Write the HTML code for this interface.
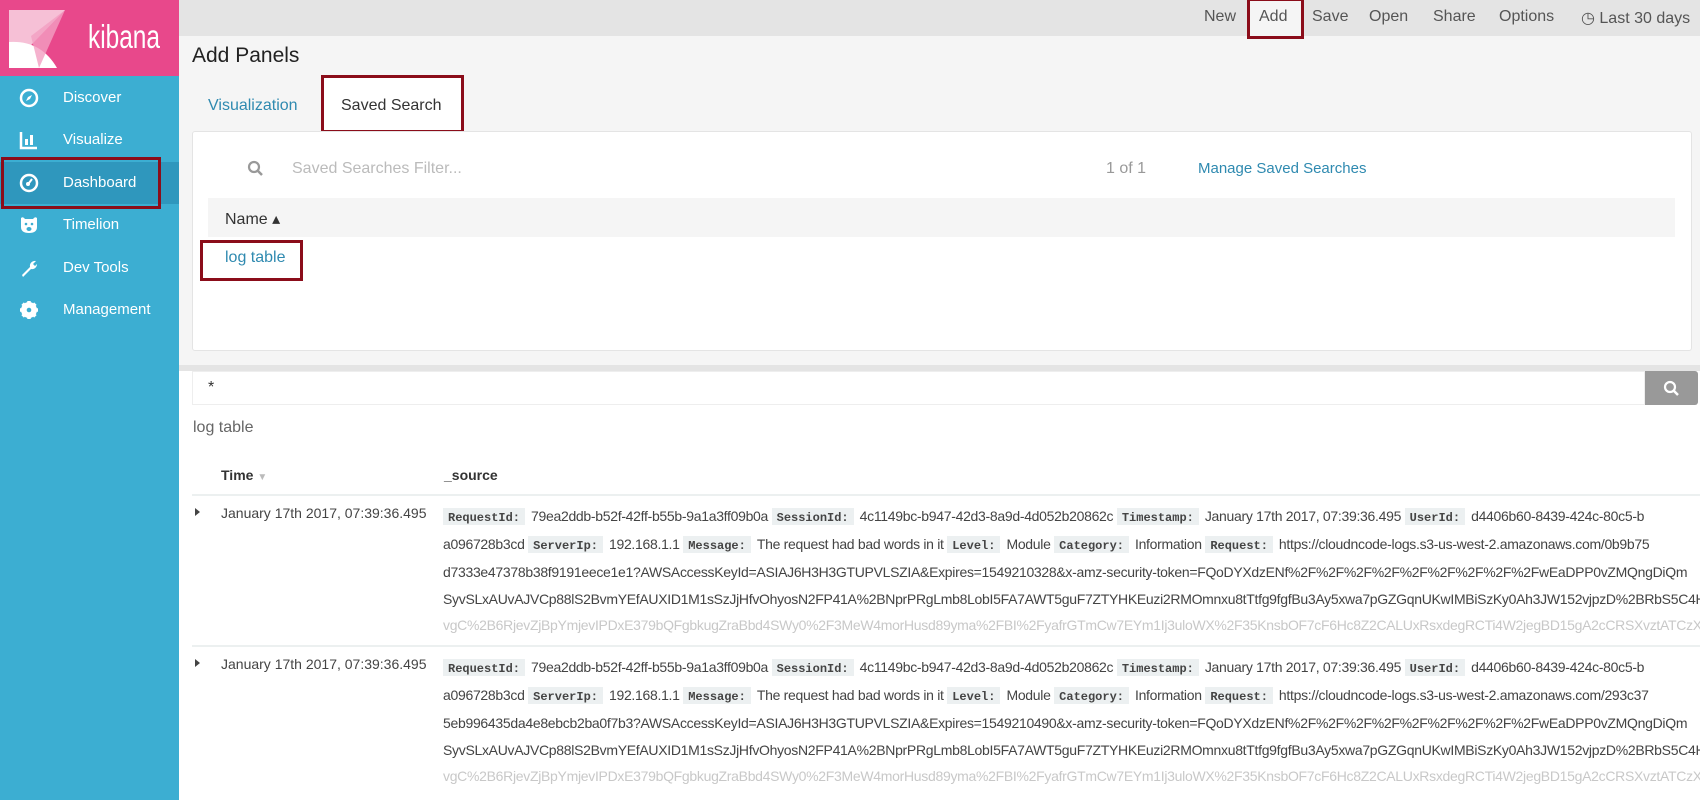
<!DOCTYPE html>
<html><head><meta charset="utf-8"><style>
*{box-sizing:border-box;margin:0;padding:0}
body{width:1700px;height:800px;overflow:hidden;font-family:"Liberation Sans",sans-serif;background:#f5f5f5;position:relative;color:#333}
.side{position:absolute;left:0;top:0;width:179px;height:800px;background:#3caed2}
.logo{height:76px;background:#e8488b;position:relative;overflow:hidden}
.logo span{position:absolute;left:88px;top:18px;color:#fff;font-size:33px;transform:scaleX(0.74);transform-origin:left top;white-space:nowrap}
.nav{position:absolute;left:0;width:179px;height:42px;color:#fff;font-size:15px}
.nav .t{position:absolute;left:63px;top:12px}
.nav svg{position:absolute;left:19px;top:11px}
.sel{background:#2f97bd}
.rbox{position:absolute;border:3px solid #8b0d1a}
.top{position:absolute;left:179px;top:0;right:0;height:36px;background:#e4e4e4}
.menu{position:absolute;top:8px;font-size:16px;color:#555}
.a{position:absolute}
.panel{position:absolute;left:192px;top:131px;width:1500px;height:220px;background:#fff;border:1px solid #e4e4e4;border-radius:3px}
.row{position:absolute;left:443px;white-space:nowrap;overflow:hidden;width:1257px;font-size:14px;color:#444;letter-spacing:-0.3px}
.k{font-family:"Liberation Mono",monospace;font-weight:bold;font-size:12px;background:#ecf0f1;padding:3px 5px;color:#444;margin-right:6px;letter-spacing:0}
.fade{color:#c8c8c8}
.tm{position:absolute;left:221px;font-size:14px;color:#444}
.car{position:absolute;left:195px;width:0;height:0;border-left:5px solid #444;border-top:4px solid transparent;border-bottom:4px solid transparent}
</style></head><body>
<div class="side">
 <div class="logo">
  <svg width="56" height="58" style="position:absolute;left:9px;top:10px" viewBox="0 0 56 58">
   <polygon points="0,0 56,0 0,58" fill="#f6c0d6"/>
   <path d="M0,32 Q32,30 48,58 L0,58Z" fill="#fff"/>
   <polygon points="22,26 56,0 30,58" fill="#f29fc2" opacity=".8"/>
  </svg>
  <span>kibana</span>
 </div>
 <div class="nav" style="top:77px"><svg width="20" height="20" viewBox="0 0 20 20"><circle cx="10" cy="10" r="8" fill="none" stroke="#fff" stroke-width="2.5"/><path d="M13,7 L11,11 L7,13 L9,9Z" fill="#fff"/></svg><span class="t">Discover</span></div>
 <div class="nav" style="top:119px"><svg width="20" height="20" viewBox="0 0 20 20"><path d="M2,2 V18 H18" fill="none" stroke="#fff" stroke-width="2.5"/><rect x="6" y="9" width="3" height="6" fill="#fff"/><rect x="11" y="5" width="3" height="10" fill="#fff"/></svg><span class="t">Visualize</span></div>
 <div class="nav sel" style="top:162px"><svg width="20" height="20" viewBox="0 0 20 20"><circle cx="10" cy="10" r="8" fill="none" stroke="#fff" stroke-width="2.5"/><circle cx="9" cy="11" r="2" fill="#fff"/><path d="M10,10 L13,6" stroke="#fff" stroke-width="2"/></svg><span class="t">Dashboard</span></div>
 <div class="nav" style="top:204px"><svg width="20" height="20" viewBox="0 0 20 20"><path d="M2,3 Q4,1 6,4 H14 Q16,1 18,3 V12 Q18,18 10,18 Q2,18 2,12Z" fill="#fff"/><circle cx="7" cy="9" r="1.3" fill="#3caed2"/><circle cx="13" cy="9" r="1.3" fill="#3caed2"/><ellipse cx="10" cy="14" rx="2.5" ry="2" fill="#3caed2"/></svg><span class="t">Timelion</span></div>
 <div class="nav" style="top:247px"><svg width="20" height="20" viewBox="0 0 20 20"><path d="M3,17 L11,9 A5,5 0 0 1 17,3 L14,6 L16,8 L18,6 A5,5 0 0 1 12,11 L4,19Z" fill="#fff"/></svg><span class="t">Dev Tools</span></div>
 <div class="nav" style="top:289px"><svg width="20" height="20" viewBox="0 0 20 20"><circle cx="10" cy="10" r="6" fill="none" stroke="#fff" stroke-width="4"/><g stroke="#fff" stroke-width="3.5"><path d="M10,1V19M1,10H19M3.6,3.6L16.4,16.4M16.4,3.6L3.6,16.4"/></g><circle cx="10" cy="10" r="2.3" fill="#3caed2"/></svg><span class="t">Management</span></div>
</div>
<div class="rbox" style="left:1px;top:157px;width:160px;height:52px"></div>

<div class="top"></div>
<div class="menu" style="left:1204px">New</div>
<div class="a" style="left:1248px;top:0;width:55px;height:39px;background:#f5f5f5"></div>
<div class="menu" style="left:1259px">Add</div>
<div class="rbox" style="left:1247px;top:-2px;width:57px;height:41px"></div>
<div class="menu" style="left:1312px">Save</div>
<div class="menu" style="left:1369px">Open</div>
<div class="menu" style="left:1433px">Share</div>
<div class="menu" style="left:1499px">Options</div>
<div class="menu" style="left:1581px">&#9719; Last 30 days</div>

<div class="a" style="left:192px;top:44px;font-size:21px;color:#222">Add Panels</div>
<div class="a" style="left:208px;top:97px;font-size:16px;color:#2f8ab0">Visualization</div>
<div class="a" style="left:322px;top:76px;width:141px;height:56px;background:#fff"></div>
<div class="a" style="left:341px;top:97px;font-size:16px;color:#333">Saved Search</div>
<div class="rbox" style="left:321px;top:75px;width:143px;height:58px"></div>

<div class="panel"></div>
<svg class="a" style="left:247px;top:160px" width="17" height="17" viewBox="0 0 17 17"><circle cx="7" cy="7" r="5" fill="none" stroke="#999" stroke-width="2.2"/><path d="M10.5,10.5 L15,15" stroke="#999" stroke-width="2.5"/></svg>
<div class="a" style="left:292px;top:160px;font-size:16px;color:#bbb">Saved Searches Filter...</div>
<div class="a" style="left:1106px;top:160px;font-size:16px;color:#999">1 of 1</div>
<div class="a" style="left:1198px;top:160px;font-size:15px;color:#2f8ab0">Manage Saved Searches</div>
<div class="a" style="left:208px;top:198px;width:1467px;height:39px;background:#f5f5f5"></div>
<div class="a" style="left:225px;top:209px;font-size:16px;color:#333">Name &#9652;</div>
<div class="a" style="left:225px;top:249px;font-size:16px;color:#2f8ab0">log table</div>
<div class="rbox" style="left:200px;top:240px;width:103px;height:41px"></div>

<div class="a" style="left:179px;top:365px;width:1521px;height:435px;background:#fff"></div>
<div class="a" style="left:179px;top:365px;width:1521px;height:6px;background:#e4e4e4"></div>
<div class="a" style="left:192px;top:371px;width:1453px;height:34px;background:#fff;border:1px solid #eee"></div>
<div class="a" style="left:208px;top:379px;font-size:16px">*</div>
<div class="a" style="left:1645px;top:371px;width:53px;height:34px;background:#999;border-radius:0 3px 3px 0"></div>
<svg class="a" style="left:1663px;top:380px" width="17" height="17" viewBox="0 0 17 17"><circle cx="7" cy="7" r="5" fill="none" stroke="#fff" stroke-width="2.2"/><path d="M10.5,10.5 L15,15" stroke="#fff" stroke-width="2.5"/></svg>
<div class="a" style="left:193px;top:419px;font-size:16px;color:#666">log table</div>
<div class="a" style="left:221px;top:467px;font-size:14px;font-weight:bold;color:#333">Time <span style="color:#bbb;font-size:10px">&#9660;</span></div>
<div class="a" style="left:444px;top:467px;font-size:14px;font-weight:bold;color:#333">_source</div>
<div class="a" style="left:192px;top:494px;width:1508px;height:2px;background:#ecf0f0"></div>
<div class="a" style="left:192px;top:645px;width:1508px;height:2px;background:#ecf0f0"></div>

<div class="car" style="top:508px"></div>
<div class="tm" style="top:505px">January 17th 2017, 07:39:36.495</div>
<div class="row" style="top:508px"><span class="k">RequestId:</span>79ea2ddb-b52f-42ff-b55b-9a1a3ff09b0a <span class="k">SessionId:</span>4c1149bc-b947-42d3-8a9d-4d052b20862c <span class="k">Timestamp:</span>January 17th 2017, 07:39:36.495 <span class="k">UserId:</span>d4406b60-8439-424c-80c5-b</div>
<div class="row" style="top:536px">a096728b3cd <span class="k">ServerIp:</span>192.168.1.1 <span class="k">Message:</span>The request had bad words in it <span class="k">Level:</span>Module <span class="k">Category:</span>Information <span class="k">Request:</span>https://cloudncode-logs.s3-us-west-2.amazonaws.com/0b9b75</div>
<div class="row" style="top:564px">d7333e47378b38f9191eece1e1?AWSAccessKeyId=ASIAJ6H3H3GTUPVLSZIA&amp;Expires=1549210328&amp;x-amz-security-token=FQoDYXdzENf%2F%2F%2F%2F%2F%2F%2F%2F%2FwEaDPP0vZMQngDiQm</div>
<div class="row" style="top:591px">SyvSLxAUvAJVCp88lS2BvmYEfAUXID1M1sSzJjHfvOhyosN2FP41A%2BNprPRgLmb8LobI5FA7AWT5guF7ZTYHKEuzi2RMOmnxu8tTtfg9fgfBu3Ay5xwa7pGZGqnUKwIMBiSzKy0Ah3JW152vjpzD%2BRbS5C4Hb</div>
<div class="row fade" style="top:617px">vgC%2B6RjevZjBpYmjevIPDxE379bQFgbkugZraBbd4SWy0%2F3MeW4morHusd89yma%2FBI%2FyafrGTmCw7EYm1Ij3uloWX%2F35KnsbOF7cF6Hc8Z2CALUxRsxdegRCTi4W2jegBD15gA2cCRSXvztATCzX</div>

<div class="car" style="top:659px"></div>
<div class="tm" style="top:656px">January 17th 2017, 07:39:36.495</div>
<div class="row" style="top:659px"><span class="k">RequestId:</span>79ea2ddb-b52f-42ff-b55b-9a1a3ff09b0a <span class="k">SessionId:</span>4c1149bc-b947-42d3-8a9d-4d052b20862c <span class="k">Timestamp:</span>January 17th 2017, 07:39:36.495 <span class="k">UserId:</span>d4406b60-8439-424c-80c5-b</div>
<div class="row" style="top:687px">a096728b3cd <span class="k">ServerIp:</span>192.168.1.1 <span class="k">Message:</span>The request had bad words in it <span class="k">Level:</span>Module <span class="k">Category:</span>Information <span class="k">Request:</span>https://cloudncode-logs.s3-us-west-2.amazonaws.com/293c37</div>
<div class="row" style="top:715px">5eb996435da4e8ebcb2ba0f7b3?AWSAccessKeyId=ASIAJ6H3H3GTUPVLSZIA&amp;Expires=1549210490&amp;x-amz-security-token=FQoDYXdzENf%2F%2F%2F%2F%2F%2F%2F%2F%2FwEaDPP0vZMQngDiQm</div>
<div class="row" style="top:742px">SyvSLxAUvAJVCp88lS2BvmYEfAUXID1M1sSzJjHfvOhyosN2FP41A%2BNprPRgLmb8LobI5FA7AWT5guF7ZTYHKEuzi2RMOmnxu8tTtfg9fgfBu3Ay5xwa7pGZGqnUKwIMBiSzKy0Ah3JW152vjpzD%2BRbS5C4Hb</div>
<div class="row fade" style="top:768px">vgC%2B6RjevZjBpYmjevIPDxE379bQFgbkugZraBbd4SWy0%2F3MeW4morHusd89yma%2FBI%2FyafrGTmCw7EYm1Ij3uloWX%2F35KnsbOF7cF6Hc8Z2CALUxRsxdegRCTi4W2jegBD15gA2cCRSXvztATCzX</div>
</body></html>
